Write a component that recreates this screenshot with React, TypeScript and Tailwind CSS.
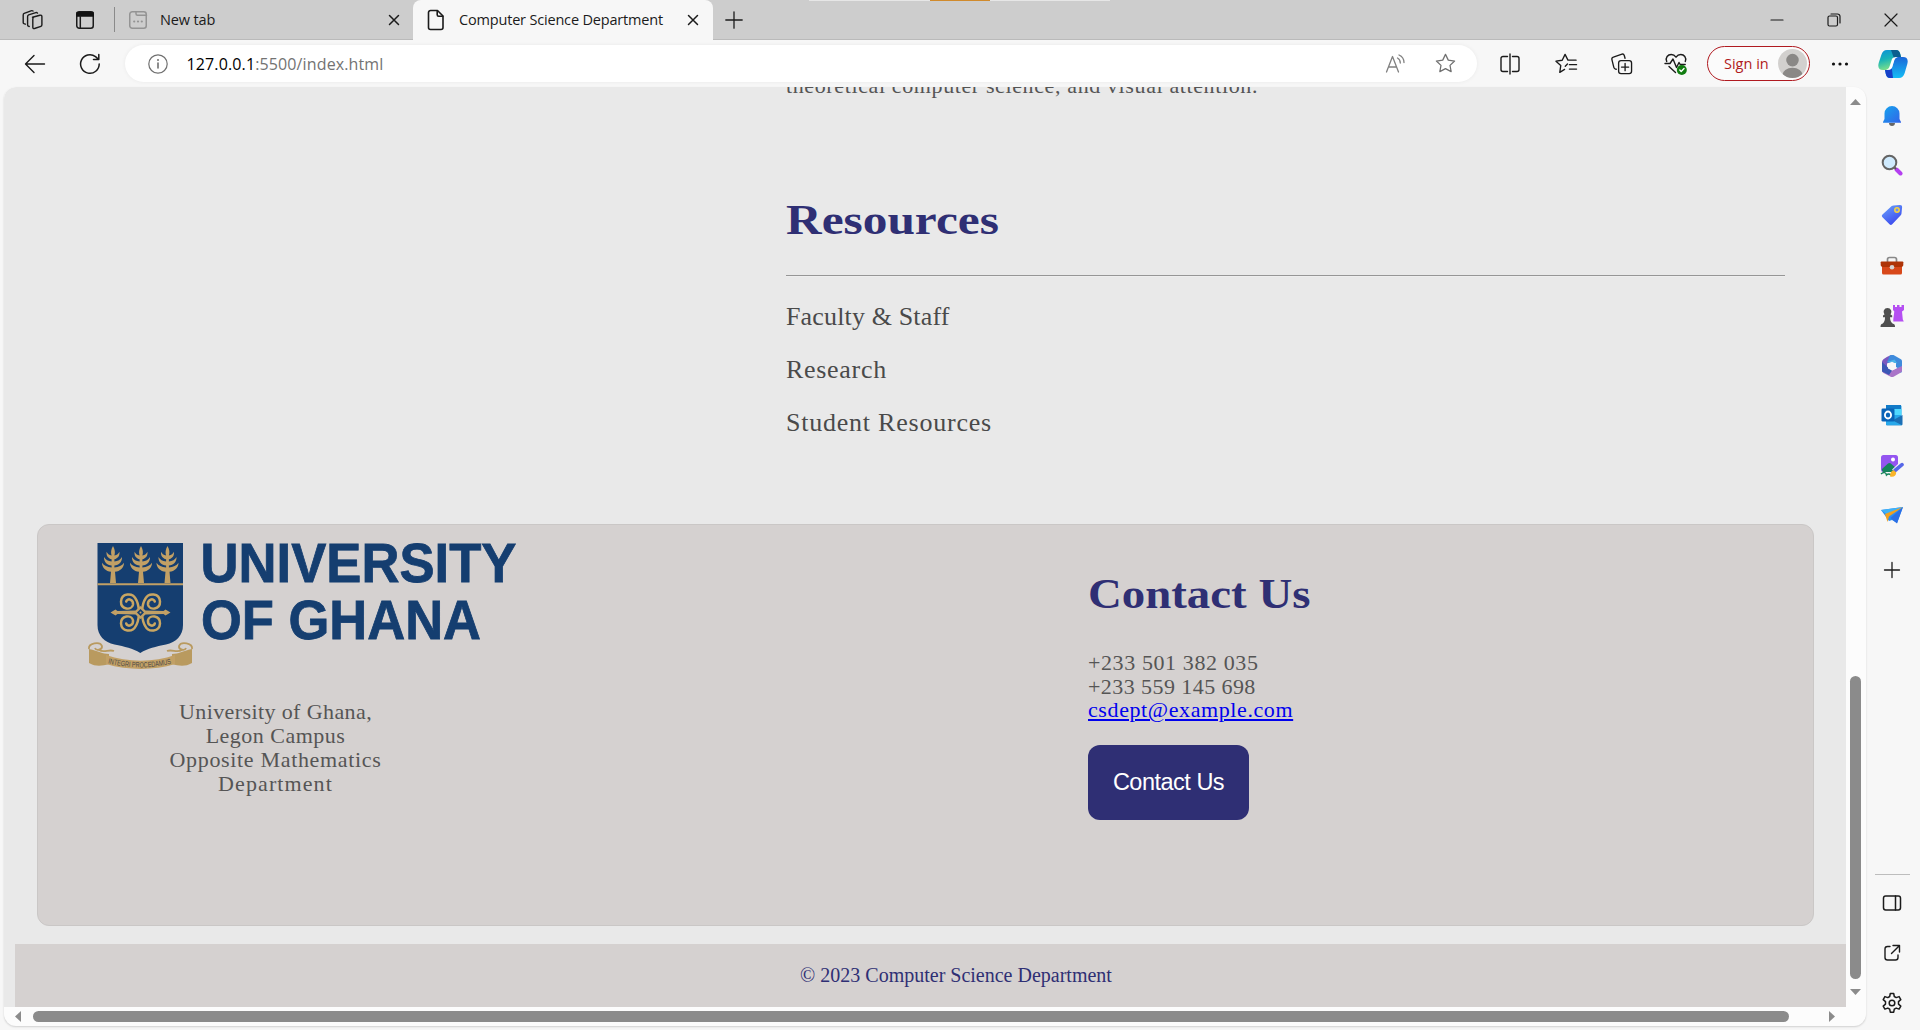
import React from 'react';

const SERIF = "font-['Liberation_Serif',serif]";

type IconProps = { w?: number; h?: number; box?: string; children: React.ReactNode; stroke?: string; sw?: number };
const Ico = ({ w = 24, h = 24, box = '0 0 24 24', children, stroke = '#1b1b1b', sw = 1.4 }: IconProps) => (
  <svg width={w} height={h} viewBox={box} fill="none" stroke={stroke} strokeWidth={sw} strokeLinecap="round" strokeLinejoin="round" className="shrink-0">
    {children}
  </svg>
);

const Slot = ({ className, children }: { className: string; children: React.ReactNode }) => (
  <div className={'flex shrink-0 items-center justify-center ' + className}>{children}</div>
);

function TabBar() {
  return (
    <div className="relative flex h-10 shrink-0 items-center border-b border-[#bababa] bg-[#cdcdcd]">
      <div className="absolute left-[809px] top-0 flex h-px w-[301px] justify-center bg-[#e6e6e6]">
        <div className="h-px w-[60px] bg-[#d08a2c]" />
      </div>
      <Slot className="ml-[21px] w-6">
        <Ico w={24} h={24}>
          <path d="M11.5 9.2l7.4-2c1.200-.3 2 .3 2 1.400v8.200c0 .8-.3 1.300-1 1.500l-6.400 2.200c-1 .3-1.700-.2-1.700-1.200v-8.400c0-.9.2-1.500 1-1.700z" />
          <path d="M8.200 18.500l-.8-.3c-.6-.2-.8-.5-.8-1.200V8.600c0-.9.300-1.400 1-1.700l7.200-2.300c.7-.2 1.300 0 1.700.5" />
          <path d="M4.300 16.200l-1.300-.5c-.7-.3-.8-.7-.8-1.300V6.900c0-.9.200-1.300 1-1.600l6.800-2.500c.8-.3 1.500-.2 2 .2" />
        </Ico>
      </Slot>
      <Slot className="ml-7 w-6">
        <Ico w={20} h={20} box="0 0 20 20" sw={1.5}>
          <rect x="1.750" y="1.750" width="16.500" height="16.500" rx="2.500" />
          <path d="M2 2.500h16V6H2z" fill="#111" stroke="#111" />
          <path d="M5.300 6v12" />
        </Ico>
      </Slot>
      <div className="ml-[17px] h-[25px] w-px bg-[#8a8a8a]" />
      <Slot className="ml-[13px] w-5">
        <Ico w={20} h={20} box="0 0 20 20" stroke="#949494" sw={1.5}>
          <rect x="1.750" y="1.750" width="16.500" height="16.500" rx="2.500" />
          <path d="M8 2.500v1.200c0 1 .6 1.500 1.500 1.500h9" />
          <path d="M6.200 11.500h.01M10 11.500h.01M13.800 11.500h.01" strokeWidth="2.200" />
        </Ico>
      </Slot>
      <span className="ml-[12px] w-[226px] whitespace-nowrap font-['Open_Sans','Noto_Sans',sans-serif] text-[14.500px] leading-5 tracking-[-0.150px] text-[#1b1b1b]">New tab</span>
      <Slot className="w-4">
        <Ico w={12} h={12} box="0 0 12 12" sw={1.5}><path d="M1.500 1.500l9 9M10.500 1.500l-9 9" /></Ico>
      </Slot>
      <div className="ml-[11px] flex h-10 w-[300px] shrink-0 items-center self-start rounded-t-lg bg-[#f7f7f7]">
        <Slot className="ml-[14px] w-[18px]">
          <Ico w={18} h={22} box="0 0 18 22" sw={1.6}>
            <path d="M3.500 1.500h7l5.500 5.500v11.500a2 2 0 0 1-2 2h-10.500a2 2 0 0 1-2-2v-15a2 2 0 0 1 2-2z" />
            <path d="M10.200 1.800v4c0 1 .5 1.500 1.500 1.500h4" />
          </Ico>
        </Slot>
        <span className="ml-[14px] w-[226px] whitespace-nowrap font-['Open_Sans','Noto_Sans',sans-serif] text-[14.500px] leading-5 tracking-[-0.180px] text-[#1b1b1b]">Computer Science Department</span>
        <Slot className="w-4">
          <Ico w={12} h={12} box="0 0 12 12" sw={1.5}><path d="M1.500 1.500l9 9M10.500 1.500l-9 9" /></Ico>
        </Slot>
      </div>
      <Slot className="ml-3 w-[18px]">
        <Ico w={18} h={18} box="0 0 18 18" sw={1.3}><path d="M9 .8v16.400M.8 9h16.400" /></Ico>
      </Slot>
      <div className="flex-1" />
      <Slot className="w-[57px]"><Ico w={14} h={14} box="0 0 14 14" sw={1.2}><path d="M1 7h12" /></Ico></Slot>
      <Slot className="w-[57px]">
        <Ico w={14} h={14} box="0 0 14 14" sw={1.2}>
          <rect x="1" y="3" width="9.500" height="10" rx="1.500" />
          <path d="M4 1h6.500a2.500 2.500 0 0 1 2.500 2.500V10" />
        </Ico>
      </Slot>
      <Slot className="w-[58px]"><Ico w={14} h={14} box="0 0 14 14" sw={1.2}><path d="M1 1l12 12M13 1L1 13" /></Ico></Slot>
    </div>
  );
}

const STAR = 'M12 2.500l2.900 6 6.600.9-4.800 4.600 1.200 6.500-5.900-3.100-5.900 3.100 1.200-6.500L2.500 9.400l6.600-.9z';

function Toolbar() {
  return (
    <div className="flex h-[47px] shrink-0 items-center bg-[#f7f7f7]">
      <Slot className="ml-2 w-[54px]">
        <Ico w={22} h={20} box="0 0 22 20" sw={1.4}><path d="M20.500 10H2M10 1.500L1.500 10l8.500 8.500" /></Ico>
      </Slot>
      <Slot className="w-[55px]">
        <Ico w={22} h={22} box="0 0 22 22" sw={1.5}><path d="M20.200 11A9.300 9.300 0 1 1 16.500 3.600L19.500 6.300M19.800 1.500v5h-5.300" /></Ico>
      </Slot>
      <div className="ml-2 flex h-[37px] w-[1352px] shrink-0 items-center rounded-full bg-white shadow-[0_0_4px_rgba(0,0,0,0.060)]">
        <Slot className="ml-[22.500px] w-5">
          <Ico w={20} h={20} box="0 0 20 20" stroke="#707070" sw={1.2}>
            <circle cx="10" cy="10" r="9.200" /><path d="M10 9v5" strokeWidth="1.600" /><path d="M10 6h.01" strokeWidth="2" />
          </Ico>
        </Slot>
        <span className="ml-[19px] whitespace-nowrap font-['Open_Sans','Noto_Sans',sans-serif] text-[16px] leading-6 tracking-[0.130px] text-[#737373]"><span className="text-black">127.0.0.1</span>:5500/index.html</span>
        <div className="flex-1" />
        <Slot className="w-[50px]">
          <Ico w={22} h={22} box="0 0 22 22" stroke="#808080" sw={1.3}>
            <path d="M2.500 19L8.500 3.500 14.500 19M4.500 14h8" />
            <path d="M13.500 5c2 1 2.800 2.800 2.800 5M15 2c3.500 1.500 5 4.300 5 7.500" />
          </Ico>
        </Slot>
        <Slot className="mr-[7px] w-[50px]"><Ico w={23} h={23} stroke="#707070" sw={1.3}><path d={STAR} /></Ico></Slot>
      </div>
      <Slot className="ml-[5px] w-[56px]">
        <Ico w={22} h={22} box="0 0 22 22"><path d="M8.500 3.500H4a2 2 0 0 0-2 2v11a2 2 0 0 0 2 2h4.500M13.500 3.500H18a2 2 0 0 1 2 2v11a2 2 0 0 1-2 2h-4.500M11 1v20" /></Ico>
      </Slot>
      <Slot className="w-[56px]">
        <Ico w={23} h={23}><path d="M10 18.200l-5 3 1-7L1 9.600l6.500-1L10.500 2.500l3 6H22M15 13.200h7.500M15 17.800h7.500M13 12.500l-2.300 2.300" /></Ico>
      </Slot>
      <Slot className="w-[54px]">
        <Ico w={23} h={23}>
          <rect x="9" y="9" width="13.500" height="13.500" rx="2.500" /><path d="M15.750 12v7.500M12 15.750h7.500" />
          <path d="M6.500 18l-.8-.2c-1-.3-1.500-.9-1.700-1.700L2 8c-.3-1.300.2-2.200 1.500-2.600L12.500 2.200c1.200-.3 2 .2 2.400 1.400l.8 2.900" />
        </Ico>
      </Slot>
      <Slot className="w-[56px]">
        <Ico w={24} h={24}>
          <path d="M2.700 9.500C1 5.500 4 2.500 7.200 2.500c2 0 3.600 1 4.800 2.700 1.200-1.700 2.800-2.700 4.800-2.700 3.200 0 6 3 4.500 7M5 14.500l6.500 6" />
          <path d="M1 11.500h5L9 7l3.500 8.500 2.500-5 1.200 2h5" />
          <circle cx="17.800" cy="18" r="5" fill="#107c10" stroke="none" /><path d="M15.800 18l1.400 1.400 2.800-2.800" stroke="#fff" />
        </Ico>
      </Slot>
      <div className="ml-[3px] flex h-[35px] w-[103px] shrink-0 items-center rounded-full border border-[#b01a20] bg-[#fbfbfb] pl-4">
        <span className="w-[53px] whitespace-nowrap font-['Open_Sans','Noto_Sans',sans-serif] text-[14.500px] leading-5 text-[#b01a20]">Sign in</span>
        <svg width="29" height="29" viewBox="0 0 30 30" className="ml-px shrink-0">
          <clipPath id="av"><circle cx="15" cy="15" r="15" /></clipPath>
          <g clipPath="url(#av)"><path d="M0 0h30v30H0z" fill="#d2d0ce" /><circle cx="15" cy="11.500" r="6.500" fill="#8a8886" /><ellipse cx="15" cy="27" rx="10.500" ry="7.500" fill="#8a8886" /></g>
        </svg>
      </div>
      <Slot className="ml-[2px] w-[56px]">
        <svg width="18" height="4" viewBox="0 0 18 4" fill="#111"><circle cx="2.500" cy="2" r="1.600" /><circle cx="9" cy="2" r="1.600" /><circle cx="15.500" cy="2" r="1.600" /></svg>
      </Slot>
      <Slot className="w-[50px]">
        <svg width="30" height="28" viewBox="0 0 30 28">
          <defs>
            <linearGradient id="c1" x1="0" y1="0" x2="0.300" y2="1"><stop offset="0" stopColor="#0a8fd8" /><stop offset="0.500" stopColor="#17b3b8" /><stop offset="1" stopColor="#7ce08a" /></linearGradient>
            <linearGradient id="c2" x1="0" y1="0" x2="0" y2="1"><stop offset="0" stopColor="#1b66d8" /><stop offset="1" stopColor="#15bdf5" /></linearGradient>
          </defs>
          <path d="M9 0h9c2.500 0 3.500 1.500 4.200 3.800L23 7h-3c-2.500 0-3.500 1-4.200 3.500L14 17c-.8 2-2 3-4.500 3H5c-4 0-5.500-2.500-4.300-7L3.300 5C4.500 1.500 6 0 9 0z" fill="url(#c1)" />
          <path d="M13 0h5c2.500 0 3.500 1.500 4.200 3.800L23 7h-3c-2 0-3 .6-3.800 2z" fill="#0b5f8f" />
          <path d="M21 28h-9c-2.500 0-3.500-1.500-4.200-4L7 20h3c2.500 0 3.500-1 4.200-3.500L16 10c.8-2 2-3 4.500-3H25c4 0 5.500 2.500 4.300 7l-2.600 9c-1.200 3.500-2.700 5-5.700 5z" fill="url(#c2)" />
          <path d="M7 20h3c2 0 3-.6 3.800-2L15 28h-3c-2.500 0-3.500-1.500-4.200-4z" fill="#1740c8" />
          <path d="M13.500 10.500c.5-2.400 2-3.500 6-3.500-2 .8-2.700 1.800-3.300 3.700l-1.800 6c-.7 2.300-2.300 3.300-6.400 3.300 2.300-.7 3-1.700 3.600-3.700z" fill="#fff" />
        </svg>
      </Slot>
    </div>
  );
}

const Frond = ({ x }: { x: number }) => (
  <g transform={`translate(${x} 0)`} fill="#c2a065">
    <path d="M0 3c2 3.500 2.400 6.500 1.400 9.500 2.600-.5 4.200-1.800 5-3.800.6 4-1.600 6.700-5 7.600v2.200c3.600-.4 6-2 7.600-4.600.3 4.800-3 8-7.600 8.600v2c4.400-.4 7.600-2 9.600-4.800 0 5.300-4 8.500-9 9L3 40h-6l1-11.300c-5-.5-9-3.700-9-9 2 2.800 5.200 4.400 9.600 4.800v-2c-4.600-.6-7.900-3.800-7.600-8.600 1.600 2.600 4 4.200 7.600 4.600v-2.200c-3.400-.9-5.600-3.600-5-7.600.8 2 2.400 3.300 5 3.800C-2.400 9.500-2 6.500 0 3z" />
  </g>
);

const Curl = ({ t }: { t: string }) => (
  <path transform={t} d="M1.500-1.500C2-8 3-11 5-14 8-20 19-19.500 19.500-11c.3 8-10.500 9.500-12 3.200C6.800-13 13-15 14.300-11" fill="none" stroke="#c9a662" strokeWidth="2.500" strokeLinecap="round" />
);

function Logo() {
  return (
    <svg width="460" height="136" viewBox="0 0 460 136" className="block shrink-0 overflow-visible">
      <path d="M12.500 8h85.500v82c0 11-7 17-17 19.500-10.500 2.300-18 3.500-25.700 8.500-7.800-5-15.300-6.200-25.800-8.500-10-2.500-17-8.500-17-19.500z" fill="#153e70" />
      <g transform="translate(0 8)"><Frond x={28} /><Frond x={56} /><Frond x={82.5} /></g>
      <path d="M12.500 49.200h85.500" stroke="#c2a065" strokeWidth="2" />
      <g transform="translate(55.500 77.500)">
        <Curl t="" /><Curl t="scale(-1 1)" /><Curl t="scale(1 -1)" /><Curl t="scale(-1 -1)" />
        <path d="M-30 0l5-3 2 1.400L-5-2 0-6.500 5-2l18 .4L25-3l5 3-5 3-2-1.400L5 2 0 6.500-5 2l-18-.4L-25 3z" fill="#c2a065" />
        <rect x="-2.500" y="-2.500" width="5" height="5" transform="rotate(45)" fill="#153e70" /><circle r="1" fill="#c2a065" />
      </g>
      <g transform="translate(0 -1)">
        <path d="M4 115v14c7 4 13 3 20 1v-10c-7 0-10-3-20-5zM107 115v14c-7 4-13 3-20 1v-10c7 0 10-3 20-5z" fill="#b99a5f" />
        <path d="M4 115c-1-6 11-8 13-3 .5 4-6 5-7 2M14 116c5 3 10-1 15 1M107 115c1-6-11-8-13-3-.5 4 6 5 7 2M97 116c-5 3-10-1-15 1" fill="none" stroke="#b99a5f" strokeWidth="1.800" />
        <path d="M21 121c22 7.500 48 7.500 69 0v9c-21 6.500-47 6.500-69 0z" fill="#c2a065" />
        <path id="motto" d="M23 129.300c22 5.500 44 5.500 65 0" fill="none" />
        <text className="font-['Liberation_Sans',sans-serif]" fontSize="7.600" fill="#4c4a48"><textPath href="#motto" textLength="64" lengthAdjust="spacingAndGlyphs">INTEGRI PROCEDAMUS</textPath></text>
      </g>
      <text x="115.500" y="47.300" textLength="316" lengthAdjust="spacingAndGlyphs" className="font-['Liberation_Sans',sans-serif] font-bold" fontSize="55.400" fill="#153e70" stroke="#153e70" strokeWidth="0.800">UNIVERSITY</text>
      <text x="116" y="103.700" textLength="280" lengthAdjust="spacingAndGlyphs" className="font-['Liberation_Sans',sans-serif] font-bold" fontSize="55.400" fill="#153e70" stroke="#153e70" strokeWidth="0.800">OF GHANA</text>
    </svg>
  );
}

function Page() {
  return (
    <div className={'flex h-[920px] w-[1842px] shrink-0 flex-col overflow-hidden rounded-tl-xl bg-[#e9e9e9] text-[#4a4a4a] ' + SERIF}>
      <div className="ml-[782px] h-[188px] w-[999px]">
        <p className="-mt-[13px] whitespace-nowrap text-[22px] leading-6 tracking-[0.620px] text-[#555]">theoretical computer science, and visual attention.</p>
        <h1 className="mt-[98px] inline-block origin-left scale-x-[1.175] whitespace-nowrap text-[42px] font-bold leading-[48px] text-[#2f2f74]">Resources</h1>
      </div>
      <div className="ml-[782px] h-[2px] w-[999px] shrink-0 border-t border-[#969696] bg-[#eeeeee]" />
      <ul className="ml-[782px] mt-[13px] text-[26px] leading-[53px]">
        <li className="tracking-[0.150px]">Faculty &amp; Staff</li>
        <li className="tracking-[0.700px]">Research</li>
        <li className="tracking-[0.770px]">Student Resources</li>
      </ul>
      <div className="ml-[33px] mt-[75px] flex h-[402px] w-[1777px] shrink-0 rounded-xl border border-[#cac7c6] bg-[#d5d1d0] text-[22px] leading-6 text-[#555]">
        <div className="w-[1050px] pl-[47px] pt-[10px]">
          <Logo />
          <div className="mt-[29px] w-[381px] text-center">
            <p className="tracking-[0.400px]">University of Ghana,</p>
            <p className="tracking-[0.480px]">Legon Campus</p>
            <p className="tracking-[0.670px]">Opposite Mathematics</p>
            <p className="tracking-[1.100px]">Department</p>
          </div>
        </div>
        <div className="pt-[45px]">
          <h2 className="origin-left scale-x-[1.115] whitespace-nowrap text-[42px] font-bold leading-[48px] text-[#2f2f74]">Contact Us</h2>
          <p className="mt-[33px] tracking-[0.600px]">+233 501 382 035</p>
          <p className="tracking-[0.430px]">+233 559 145 698</p>
          <a href="#contact" className="-mt-px block tracking-[0.600px] text-[#0000ee] underline decoration-2 underline-offset-2">csdept@example.com</a>
          <button className="mt-[23px] block h-[75px] w-[161px] rounded-xl bg-[#2f2f74] pb-px font-['Liberation_Sans',Arial,sans-serif] text-[23.500px] tracking-[-0.500px] text-white">Contact Us</button>
        </div>
      </div>
      <footer className="ml-[11px] mt-[18px] flex h-[63px] shrink-0 items-center justify-center bg-[#d5d1d0] pb-px pl-[51px] text-[20px] text-[#2f2f74]">
        <span>© 2023 Computer Science Department</span>
      </footer>
    </div>
  );
}

const SIDEBAR: { h: string; art: React.ReactNode }[] = [
  { h: 'h-[50px]', art: (
    <svg width="20" height="22" viewBox="0 0 20 22"><defs><linearGradient id="bl" x1="0" y1="0" x2="1" y2="1"><stop offset="0" stopColor="#15a5ee" /><stop offset="1" stopColor="#3263e8" /></linearGradient></defs><path d="M7 18h6c0 2-1.200 3-3 3s-3-1-3-3z" fill="#666" /><path d="M10 1a7.500 7.500 0 0 1 7.500 7.500V14l1.500 3v.8H1V17l1.500-3V8.500A7.500 7.500 0 0 1 10 1z" fill="url(#bl)" /></svg>) },
  { h: 'h-[48px]', art: (
    <svg width="22" height="22" viewBox="0 0 22 22"><path d="M15.500 15.500l4 4" stroke="#b43ff0" strokeWidth="4" strokeLinecap="round" /><path d="M12.500 12.500l2.500 2.500" stroke="#555" strokeWidth="2" /><circle cx="8.500" cy="8.500" r="6.800" fill="#cfeafd" stroke="#646464" strokeWidth="2" /></svg>) },
  { h: 'h-[52px]', art: (
    <svg width="22" height="22" viewBox="0 0 22 22"><defs><linearGradient id="tg" x1="0" y1="0" x2="0.600" y2="1"><stop offset="0" stopColor="#6ba6fb" /><stop offset="1" stopColor="#3c49ee" /></linearGradient></defs><path d="M12.500 1.500L19 1c1.500 0 2.200.8 2.100 2.200l-.6 6.300c0 .8-.4 1.300-1 1.900l-8.300 8.800c-.9.900-1.800.9-2.700 0l-7-7c-.9-.9-.9-1.900 0-2.700l9.200-8.400c.6-.4 1.100-.6 1.800-.6z" fill="url(#tg)" /><circle cx="16" cy="6" r="2.200" fill="#6c8ff5" stroke="#f8d33c" strokeWidth="1.500" /></svg>) },
  { h: 'h-[50px]', art: (
    <svg width="24" height="20" viewBox="0 0 24 20"><path d="M7.500 6V3.500c0-1.500.6-2 2-2h5c1.400 0 2 .5 2 2V6" fill="none" stroke="#888" strokeWidth="1.700" /><rect x="2" y="8" width="20" height="10.500" rx="1.500" fill="#d8481a" /><path d="M1.500 5.500h21c.5 0 .8.300.8.800V9c0 1.300-1 2-2.300 2H3C1.700 11 .7 10.300.7 9V6.300c0-.5.3-.8.8-.8z" fill="#ae3408" /><circle cx="12" cy="11.300" r="2.300" fill="#d5d5d5" /></svg>) },
  { h: 'h-[50px]', art: (
    <svg width="24" height="24" viewBox="0 0 24 24"><path d="M13 1h2v2h2V1h2.500v2h2V1H24v5l-2 1.500.8 8 1 2h-10.500V15l1-7.500L13 6z" fill="#b54ff2" /><path d="M7.500 4a4 4 0 0 1 3 6.600l1.700 1v1.700H10c.2 3 .7 4.700 2.500 6.200 1.800.3 2.700 1.500 2.500 3.500H.5c0-2 .6-3.200 2.300-3.500C4.500 18 5 16 5 13.300H3v-1.700l1.500-1A4 4 0 0 1 7.500 4z" fill="#4e4e4e" /></svg>) },
  { h: 'h-[49px]', art: (
    <svg width="22" height="24" viewBox="0 0 22 24"><path d="M10 1C6 3 1 5 1 8v8.500l5 2.500V9.500L13 6z" fill="#7b58bf" /><path d="M10 1h2.500l7 4c1.200.7 1.500 1.300 1.500 2.500v9l-6-3.500V9L6 8.500 8.500 2z" fill="#3f8bdc" /><path d="M6 8L13.500 5.500 16 9v5l5-1v4c0 1-.4 1.500-1.300 2L16 15V9.500L11 8z" fill="#4bb5e8" /><path d="M1 16l6-2 4 2.500 10-4.500v4.500c0 1-.5 1.700-1.500 2.300L13 22.500c-1.300.8-2.500.8-3.800 0L2.500 19C1.500 18.300 1 17.500 1 16z" fill="#aa74c8" /><path d="M1 8v9.500L8 21l3-4.500-4-3z" fill="#3b57b5" /><path d="M11 7.800l4 2v4.700l-4 2-4-2V9.800z" fill="#f7f7f7" /></svg>) },
  { h: 'h-[50px]', art: (
    <svg width="22" height="22" viewBox="0 0 22 22"><rect x="5" y="1" width="15.500" height="16" rx="1.500" fill="#28a8ea" /><path d="M5 1h15v4H5z" fill="#127bc8" /><path d="M13 5h7.500v6H13z" fill="#50d9ff" /><path d="M5 20l16.500-9v9c0 .8-.5 1.300-1.200 1.300H6.200c-.7 0-1.200-.5-1.200-1.300z" fill="#1b6fb5" /><path d="M5 13l16 8.300H6.200C5.500 21.300 5 20.800 5 20z" fill="#28a8ea" /><rect x=".5" y="4.500" width="13" height="13" rx="1.300" fill="#0a64b8" /><ellipse cx="7" cy="11" rx="3.100" ry="3.500" fill="none" stroke="#fff" strokeWidth="1.800" /></svg>) },
  { h: 'h-[51px]', art: (
    <svg width="24" height="24" viewBox="0 0 24 24"><rect x="1" y="1" width="17" height="17" rx="2.500" fill="#9455f0" /><circle cx="13" cy="5.500" r="2" fill="#fff" /><path d="M2 15l6-5.500c1-.8 1.800-.8 2.800 0L16 14l-3 4H4c-1.500 0-2.300-1-2-3z" fill="#16845b" /><path d="M1 20c3-2.500 5-1.500 5.500 1 1.500-1.500 3-1.500 4.500 0" fill="none" stroke="#16845b" strokeWidth="1.500" /><path d="M14 17.500L21.500 10.500" stroke="#f7f7f7" strokeWidth="5.500" /><path d="M15 16.500L22 10.700" stroke="#5667e8" strokeWidth="3.600" strokeLinecap="round" /><path d="M10 22.500c0-4 1.500-6 4-6.300l2.200 2.300c0 3-2.200 5-6.200 4z" fill="#f9b52a" /></svg>) },
  { h: 'h-[50px]', art: (
    <svg width="22" height="20" viewBox="0 0 22 20"><path d="M0 4L22 1 16 17l-5-3-3 1z" fill="#2d8df0" /><path d="M0 4L22 1 6.500 9z" fill="#3fb2f8" /><path d="M4 8L22 1 8 10.500 6.500 16z" fill="#f2a01e" /><path d="M22 1L9.500 12 16 17.500z" fill="#2b6fe6" /></svg>) },
  { h: 'h-[58px]', art: <Ico w={18} h={18} box="0 0 18 18" sw={1.3}><path d="M9 1.500v15M1.500 9h15" /></Ico> },
];

function Sidebar() {
  return (
    <aside className="flex h-[943px] w-[52px] shrink-0 flex-col items-center pt-1">
      {SIDEBAR.map((s, i) => <Slot key={i} className={'w-[52px] ' + s.h}>{s.art}</Slot>)}
      <div className="mt-[275px] h-px w-[35px] shrink-0 bg-[#bdbdbd]" />
      <Slot className="mt-[2px] h-[51px]">
        <Ico w={20} h={18} box="0 0 20 18" sw={1.5}><rect x="1.500" y="2" width="17" height="14" rx="2.200" /><path d="M13.500 2v14" /></Ico>
      </Slot>
      <Slot className="h-[50px]">
        <Ico w={18} h={18} box="0 0 18 18"><path d="M7 2.500H4.500a2.500 2.500 0 0 0-2.500 2.500v8.500A2.500 2.500 0 0 0 4.500 16h8a2.500 2.500 0 0 0 2.500-2.500V11M10 1.500h6.500V8M16.300 1.700L8.500 9.500" /></Ico>
      </Slot>
      <Slot className="h-[50px]">
        <Ico w={22} h={22} box="0 0 22 22" sw={1.5}>
          <circle cx="11" cy="11" r="2.800" />
          <path d="M9.300 1.500h3.400l.6 3 1.900 1.100 2.900-1 1.700 3-2.300 2v2.500l2.300 2-1.700 3-2.900-1-1.900 1.100-.6 3H9.300l-.6-3-1.900-1.100-2.900 1-1.700-3 2.300-2V9.600l-2.300-2 1.700-3 2.900 1 1.900-1.100z" />
        </Ico>
      </Slot>
    </aside>
  );
}

export default function App() {
  return (
    <div className="flex h-[1030px] w-[1920px] flex-col overflow-hidden bg-[#f7f7f7]">
      <TabBar />
      <Toolbar />
      <div className="flex h-[943px]">
        <div className="ml-1 flex h-[939px] w-[1862px] shrink-0 flex-col overflow-hidden rounded-xl bg-[#fcfcfc] shadow-[0_1px_2px_rgba(0,0,0,0.160)]">
          <div className="flex">
            <Page />
            <div className="flex w-5 flex-col items-center pr-px">
              <svg width="11" height="6" viewBox="0 0 11 6" className="mt-3"><path d="M0 6L5.500 0 11 6z" fill="#8b8b8b" /></svg>
              <div className="mt-[571px] h-[303px] w-[11px] rounded-full bg-[#8b8b8b]" />
              <svg width="11" height="6" viewBox="0 0 11 6" className="mt-[10px]"><path d="M0 0h11L5.500 6z" fill="#8b8b8b" /></svg>
            </div>
          </div>
          <div className="flex h-[19px] items-center">
            <svg width="6" height="11" viewBox="0 0 6 11" className="ml-[11px]"><path d="M6 0v11L0 5.500z" fill="#8b8b8b" /></svg>
            <div className="ml-3 h-[11px] w-[1756px] rounded-full bg-[#8b8b8b]" />
            <svg width="6" height="11" viewBox="0 0 6 11" className="ml-10"><path d="M0 0v11l6-5.500z" fill="#8b8b8b" /></svg>
          </div>
        </div>
        <Sidebar />
      </div>
    </div>
  );
}
